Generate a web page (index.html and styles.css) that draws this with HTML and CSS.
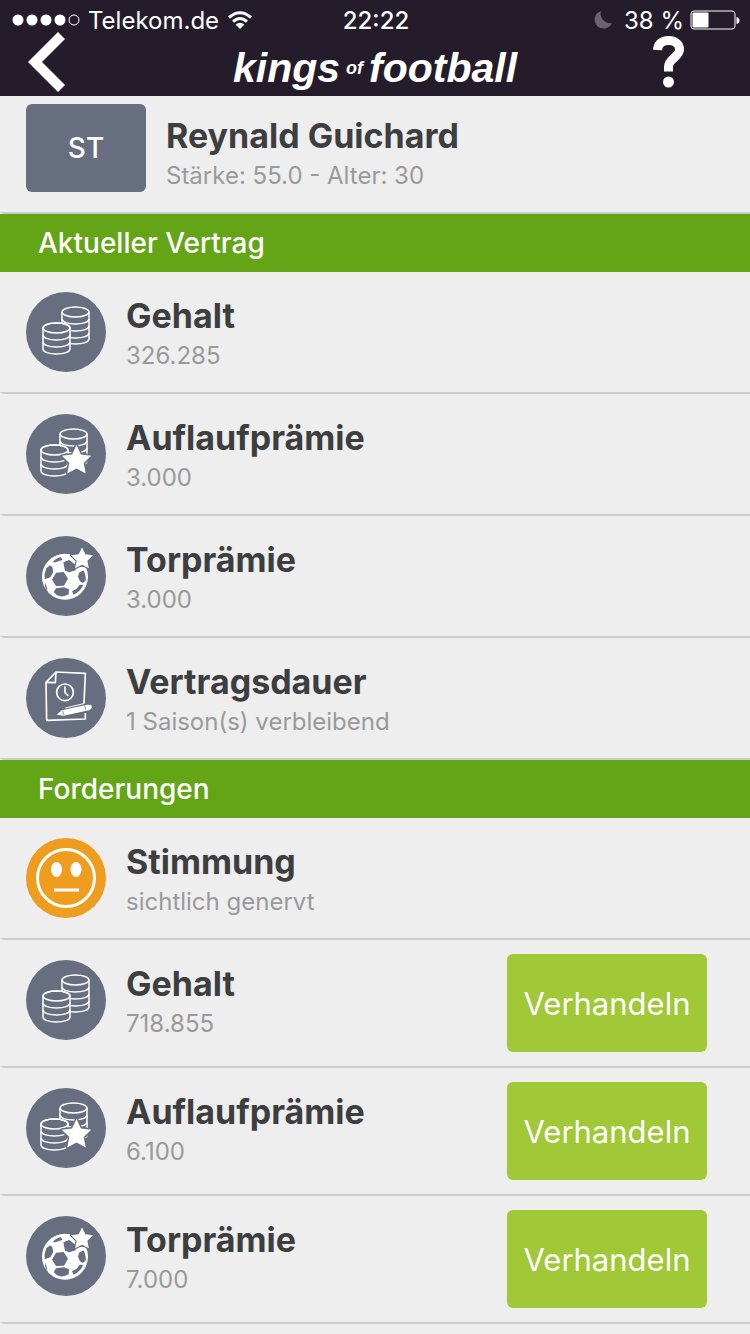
FILE: index.html
```
<!DOCTYPE html>
<html lang="de">
<head>
    <meta charset="UTF-8">
    <meta name="viewport" content="width=device-width, initial-scale=1.0">
    <title>Kings of Football</title>
    <link rel="stylesheet" href="styles.css">
</head>
<body>

<!-- Shared icons -->
<svg class="sprite" aria-hidden="true">
    <symbol id="icon-coins" viewBox="0 0 160 160">
        <path class="line" d="M72 40v54c0 6 12 10 27 10s27-4 27-10V40"/>
        <ellipse class="line" cx="99" cy="40" rx="27" ry="10"/>
        <path class="line" d="M72 54c0 6 12 10 27 10s27-4 27-10M72 68c0 6 12 10 27 10s27-4 27-10M72 82c0 6 12 10 27 10s27-4 27-10"/>
        <path class="line back" d="M34 72v42c0 6 12 10 27 10s27-4 27-10V72c0-6-12-10-27-10s-27 4-27 10z"/>
        <ellipse class="line" cx="61" cy="72" rx="27" ry="10"/>
        <path class="line" d="M34 86c0 6 12 10 27 10s27-4 27-10M34 100c0 6 12 10 27 10s27-4 27-10"/>
    </symbol>
    <symbol id="icon-star" viewBox="0 0 34 34">
        <path class="star" d="M17 3l4.300 9.200 10 1.200-7.300 7.100 2 10L17 25.700 8 30.500l2-10-7.300-7.100 10-1.200z"/>
    </symbol>
    <symbol id="icon-ball" viewBox="0 0 240 240">
        <circle cx="117" cy="122" r="69"/>
        <g class="hole">
            <path d="M90 110l23-2 13 20-12 21-24 1-12-19z"/>
            <path d="M80 79q10-13 25-16l4 9-20 7z"/>
            <path d="M112 79l18-7 18 14 1 17-19 6-13-5z"/>
            <path d="M61 97l11-9 7 5 3 15-9 16-17 6q-2-17 5-33z"/>
            <path d="M90 157l24-3 15 6-1 15q-18 11-35 3l-10-10z"/>
            <path d="M159 110l13-7q9 15 7 31l-9 7-8-5-6-14z"/>
            <path d="M138 166l14-8 9-12 11 1q-9 20-29 29z"/>
            <path d="M56 137l6 15 3 18q-9-14-9-33z"/>
        </g>
    </symbol>
    <symbol id="icon-contract" viewBox="0 0 240 240">
        <path class="paper" d="M174 137l4-91-88-4-30 31 2 114 116-4v-18"/>
        <path class="paper" d="M90 42l-2 32-28-1"/>
        <circle class="paper" cx="117" cy="103" r="25"/>
        <path class="paper" d="M117 85v19l10 10"/>
        <path d="M92 170l15-13 77-17 12 1 2 9-9 7-76 16z"/>
        <path class="clip" d="M118 150l55-13"/>
        <path class="cut" d="M110 158l4 13M176 143l4 14"/>
    </symbol>
</svg>

<!-- Top bar -->
<header class="topbar">
    <div class="status">
        <div class="status-left">
            <svg class="signal" viewBox="0 0 68 12" aria-hidden="true">
                <circle cx="6" cy="6" r="5.500"/><circle cx="20" cy="6" r="5.500"/><circle cx="34" cy="6" r="5.500"/><circle cx="48" cy="6" r="5.500"/>
                <circle class="empty" cx="62" cy="6" r="5"/>
            </svg>
            <span>Telekom.de</span>
            <svg class="wifi" viewBox="0 0 26 18" aria-hidden="true">
                <path class="arc" d="M2 6.500Q13-3 24 6.500M6 10.500Q13 4.500 20 10.500"/>
                <path d="M13 18l-4.500-4.500Q13 10 17.500 13.500z"/>
            </svg>
        </div>
        <time class="clock">22:22</time>
        <div class="status-right">
            <svg class="moon" viewBox="0 0 18 18" aria-hidden="true"><path d="M7 0A9 9 0 1 0 18 12 9.500 9.500 0 0 1 7 0z"/></svg>
            <span>38 %</span>
            <svg class="battery" viewBox="0 0 50 20" aria-hidden="true">
                <rect class="case" x="1" y="1" width="44" height="18" rx="3"/>
                <rect x="2.500" y="2.500" width="16" height="15" rx="1"/>
                <path d="M46.500 7q3 1 3 3.500t-3 3.500z"/>
            </svg>
        </div>
    </div>
    <nav class="navbar">
        <button class="nav-btn" aria-label="Zurück">
            <svg class="chevron" viewBox="0 0 38 60" aria-hidden="true"><path d="M30 0l7 7L14 30l23 23-7 7L0 30z"/></svg>
        </button>
        <h1 class="logo"><span>kings</span> <small>of</small> <span>football</span></h1>
        <button class="nav-btn nav-help" aria-label="Hilfe">
            <svg class="help" viewBox="0 0 31 52" aria-hidden="true">
                <path d="M4.500 14C5 8 9 4.500 15.500 4.500S26.500 8 26.500 13.500c0 7.500-11 9-11 17.500v4.500"/>
                <circle cx="15.500" cy="46" r="5.500"/>
            </svg>
        </button>
    </nav>
</header>

<main>
    <!-- Player -->
    <section class="player">
        <div class="position">ST</div>
        <div class="info">
            <h2>Reynald Guichard</h2>
            <p>Stärke: 55.0 - Alter: 30</p>
        </div>
    </section>

    <!-- Current contract -->
    <h3 class="section-title">Aktueller Vertrag</h3>
    <ul class="list">
        <li class="row">
            <svg class="icon" viewBox="0 0 80 80" aria-hidden="true"><use href="#icon-coins"/></svg>
            <div class="info"><h2>Gehalt</h2><p>326.285</p></div>
        </li>
        <li class="row">
            <svg class="icon" viewBox="0 0 80 80" aria-hidden="true">
                <use href="#icon-coins" x="-2" width="80" height="80"/>
                <use href="#icon-star" x="33" y="28" width="35" height="35"/>
            </svg>
            <div class="info"><h2>Auflaufprämie</h2><p>3.000</p></div>
        </li>
        <li class="row">
            <svg class="icon" viewBox="0 0 80 80" aria-hidden="true">
                <use href="#icon-ball" width="80" height="80"/>
                <use href="#icon-star" x="43" y="9" width="26" height="26"/>
            </svg>
            <div class="info"><h2>Torprämie</h2><p>3.000</p></div>
        </li>
        <li class="row">
            <svg class="icon" viewBox="0 0 80 80" aria-hidden="true"><use href="#icon-contract"/></svg>
            <div class="info"><h2>Vertragsdauer</h2><p>1 Saison(s) verbleibend</p></div>
        </li>
    </ul>

    <!-- Demands -->
    <h3 class="section-title">Forderungen</h3>
    <ul class="list">
        <li class="row">
            <svg class="icon mood" viewBox="0 0 80 80" aria-hidden="true">
                <circle class="face" cx="40" cy="40" r="28.500"/>
                <ellipse cx="30.500" cy="31.500" rx="5.500" ry="7.500"/>
                <ellipse cx="50" cy="31.500" rx="5.500" ry="7.500"/>
                <path class="face" d="M28 52h25"/>
            </svg>
            <div class="info"><h2>Stimmung</h2><p>sichtlich genervt</p></div>
        </li>
        <li class="row offer">
            <svg class="icon" viewBox="0 0 80 80" aria-hidden="true"><use href="#icon-coins"/></svg>
            <div class="info"><h2>Gehalt</h2><p>718.855</p></div>
            <button class="negotiate">Verhandeln</button>
        </li>
        <li class="row offer">
            <svg class="icon" viewBox="0 0 80 80" aria-hidden="true">
                <use href="#icon-coins" x="-2" width="80" height="80"/>
                <use href="#icon-star" x="33" y="28" width="35" height="35"/>
            </svg>
            <div class="info"><h2>Auflaufprämie</h2><p>6.100</p></div>
            <button class="negotiate">Verhandeln</button>
        </li>
        <li class="row offer">
            <svg class="icon" viewBox="0 0 80 80" aria-hidden="true">
                <use href="#icon-ball" width="80" height="80"/>
                <use href="#icon-star" x="43" y="9" width="26" height="26"/>
            </svg>
            <div class="info"><h2>Torprämie</h2><p>7.000</p></div>
            <button class="negotiate">Verhandeln</button>
        </li>
    </ul>
</main>

</body>
</html>
```

FILE: styles.css
```
* {
    box-sizing: border-box;
}

body {
    margin: 0;
    min-height: 100vh;
    background: #eeeeee;
    color: #3c3e40;
    font-family: Inter, "Liberation Sans", sans-serif;
}

h1, h2, h3, p, ul {
    margin: 0;
    padding: 0;
}

button {
    border: none;
    padding: 0;
    color: white;
    font-family: inherit;
    cursor: pointer;
}

.sprite {
    display: none;
}

/* Top bar */
.topbar {
    background: #241c2b;
    color: white;
}

.topbar svg {
    fill: white;
}

.status {
    display: grid;
    grid-template-columns: 1fr auto 1fr;
    align-items: center;
    height: 40px;
    padding: 0 10px 0 12px;
    font-size: 24px;
}

.status-left, .status-right {
    display: flex;
    align-items: center;
    gap: 8px;
}

.status-right {
    justify-content: flex-end;
    gap: 6px;
}

.clock {
    font-weight: 500;
}

.signal {
    width: 68px;
    height: 12px;
}

.signal .empty {
    fill: none;
    stroke: white;
}

.wifi {
    width: 26px;
    height: 18px;
}

.wifi .arc {
    fill: none;
    stroke: white;
    stroke-width: 3;
}

.topbar .moon {
    width: 18px;
    height: 18px;
    margin-right: 6px;
    fill: #69636e;
}

.battery {
    width: 50px;
    height: 20px;
}

.battery .case {
    fill: none;
    stroke: white;
    stroke-width: 1;
}

.navbar {
    display: grid;
    grid-template-columns: 1fr auto 1fr;
    height: 56px;
    padding: 0 28px;
}

.nav-btn {
    display: flex;
    background: none;
    width: 38px;
}

.nav-help {
    justify-content: flex-end;
    justify-self: end;
    margin-right: 38px;
}

.chevron {
    width: 38px;
    height: 60px;
    margin-top: -8px;
}

.help {
    width: 31px;
    height: 52px;
    margin-top: -4px;
}

.help path {
    fill: none;
    stroke: white;
    stroke-width: 9;
}

.logo {
    display: flex;
    align-items: center;
    gap: 6px;
    font-family: "Liberation Sans", sans-serif;
    font-size: 41px;
    font-style: italic;
    line-height: 52px;
}

.logo small {
    font-size: 18px;
}

/* Rows */
.player, .row {
    display: flex;
    align-items: flex-start;
    gap: 20px;
    min-height: 122px;
    padding: 20px 43px 20px 26px;
    border-bottom: 2px solid #cccccc;
    border-bottom-left-radius: 8px 2px;
}

.player {
    min-height: 118px;
    padding-top: 8px;
}

.position {
    display: flex;
    align-items: center;
    justify-content: center;
    width: 120px;
    height: 88px;
    border-radius: 6px;
    background: #666e80;
    color: white;
    font-size: 28px;
    font-weight: 500;
}

.info {
    flex: 1;
}

.player .info {
    padding-top: 8px;
}

.info h2 {
    font-size: 34px;
    font-weight: 700;
    line-height: 48px;
}

.info p {
    color: #9a9a9a;
    font-size: 24px;
    line-height: 32px;
}

.section-title {
    padding: 0 38px;
    background: #63a517;
    color: white;
    font-size: 28px;
    font-weight: 500;
    line-height: 58px;
}

.list {
    list-style: none;
}

.offer {
    min-height: 128px;
    padding-top: 14px;
    padding-bottom: 14px;
}

.offer .icon, .offer .info {
    margin-top: 6px;
}

.negotiate {
    width: 200px;
    height: 98px;
    border-radius: 6px;
    background: #a0c837;
    font-size: 31px;
    font-weight: 400;
}

/* Icons */
.icon {
    flex: none;
    width: 80px;
    height: 80px;
    border-radius: 50%;
    background: #666e80;
    fill: white;
}

.line {
    fill: none;
    stroke: white;
    stroke-width: 3;
}

.back {
    fill: #666e80;
}

.hole {
    fill: #666e80;
}

.paper {
    fill: none;
    stroke: white;
    stroke-width: 5;
    stroke-linejoin: round;
}

.clip {
    stroke: white;
    stroke-width: 3;
}

.cut {
    stroke: #666e80;
    stroke-width: 2;
}

.star {
    fill: white;
    stroke: #666e80;
    stroke-width: 3;
    stroke-linejoin: round;
    paint-order: stroke;
}

.mood {
    background: #ee9d1e;
}

.face {
    fill: none;
    stroke: white;
    stroke-width: 3;
}
```
